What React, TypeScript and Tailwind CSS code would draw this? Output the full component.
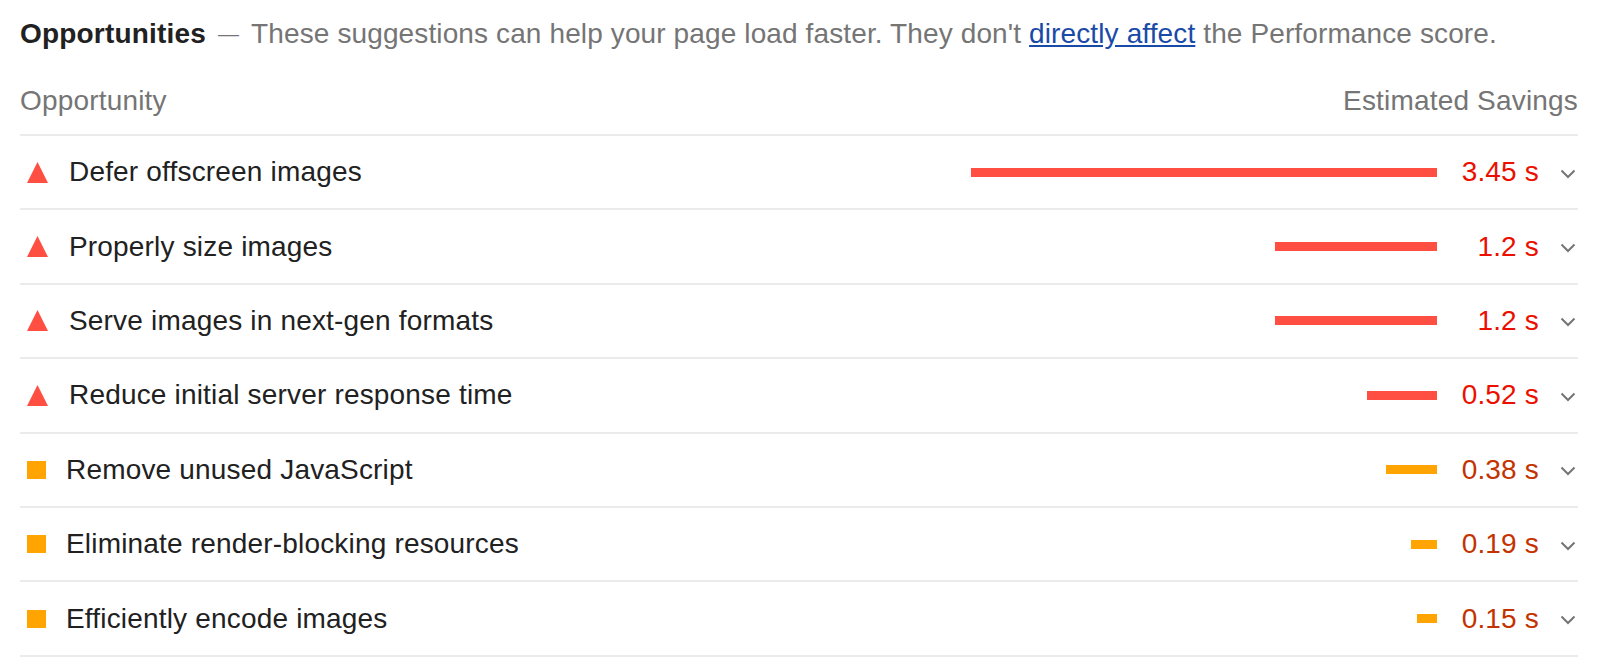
const rows = [
    { label: 'Defer offscreen images', value: 3.45, level: 'fail' },
    { label: 'Properly size images', value: 1.2, level: 'fail' },
    { label: 'Serve images in next-gen formats', value: 1.2, level: 'fail' },
    { label: 'Reduce initial server response time', value: 0.52, level: 'fail' },
    { label: 'Remove unused JavaScript', value: 0.38, level: 'average' },
    { label: 'Eliminate render-blocking resources', value: 0.19, level: 'average' },
    { label: 'Efficiently encode images', value: 0.15, level: 'average' },
];

function Chevron() {
    return (
        <svg width="16" height="10" viewBox="0 0 16 10" className="mt-[3px]">
            <polyline points="1.5,1.5 8,8 14.5,1.5" fill="none" stroke="#757575" strokeWidth="2" />
        </svg>
    );
}

export default function App() {
    return (
        <div className="w-[1600px] h-[666px] bg-white pl-[20px] pr-[22px] font-['Liberation_Sans',Arial,sans-serif] text-[28px] tracking-[0.18px] overflow-hidden">
            {/* group title */}
            <div className="h-[68px] flex items-center whitespace-nowrap">
                <span className="font-bold text-[#212121]">Opportunities</span>
                <span className="text-[21px] text-[#757575] ml-[12px] mr-[12px]">—</span>
                <span className="text-[#757575] tracking-[0.12px]">
                    These suggestions can help your page load faster. They don't{' '}
                    <a href="#" className="text-[#1a4aa8] underline">directly affect</a> the Performance score.
                </span>
            </div>

            {/* column headers */}
            <div className="h-[68px] flex items-center justify-between text-[#757575] border-b-2 border-[#ebebeb]">
                <span>Opportunity</span>
                <span>Estimated Savings</span>
            </div>

            {rows.map((row) => {
                const fail = row.level === 'fail';
                return (
                    <div key={row.label} className="h-[74.4px] flex items-center border-b-2 border-[#ebebeb] whitespace-nowrap">
                        {fail ? (
                            <svg width="21" height="21" viewBox="0 0 21 21" className="ml-[7px] mr-[21px] shrink-0">
                                <polygon points="10.5,0 21,21 0,21" fill="#ff4e42" />
                            </svg>
                        ) : (
                            <div className="ml-[7px] mr-[20px] w-[19px] h-[18px] bg-[#ffa400] shrink-0" />
                        )}
                        <span className="text-[#212121]">{row.label}</span>
                        <div className="flex-1" />
                        <div
                            className={fail ? 'h-[9px] bg-[#ff4e42]' : 'h-[9px] bg-[#ffa400]'}
                            style={{ width: Math.round(row.value * 135) }}
                        />
                        <span className={fail ? 'w-[102px] text-right text-[#eb0f00]' : 'w-[102px] text-right text-[#c33300]'}>
                            {row.value} s
                        </span>
                        <div className="ml-[21px] mr-[2px] flex items-center">
                            <Chevron />
                        </div>
                    </div>
                );
            })}
        </div>
    );
}
